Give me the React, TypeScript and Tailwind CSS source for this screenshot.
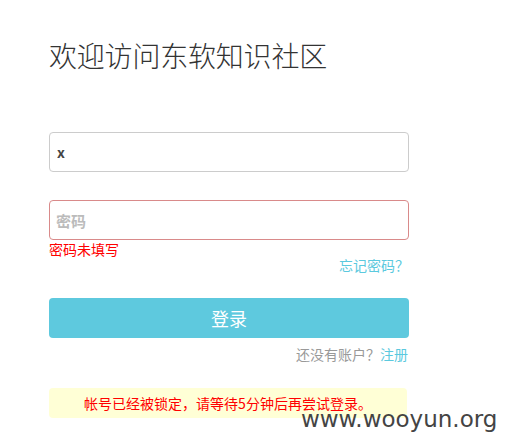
import React from 'react';

const font = { fontFamily: '"Noto Sans CJK SC", "Liberation Sans", sans-serif' };

export default function App() {
  return (
    <div className="relative w-[507px] h-[446px] bg-white overflow-hidden" style={font}>
      <div className="pl-[49px] w-[409px]">
        <h1 className="pt-[41px] text-[28px] leading-[28px] font-light text-[#333] tracking-[-0.2px]">
          欢迎访问东软知识社区
        </h1>

        <form className="mt-[63px] flex flex-col" onSubmit={(e) => e.preventDefault()}>
          <input
            defaultValue="x"
            className="h-[40px] w-[360px] rounded-[4px] border border-[#cccccc] px-[7px] text-[14px] font-bold text-[#444] outline-none"
          />
          <input
            type="password"
            placeholder="密码"
            className="mt-[28px] h-[40px] w-[360px] rounded-[4px] border border-[#d98a8a] px-[6px] text-[15px] font-bold text-[#444] placeholder:text-[#bbbbbb] outline-none"
          />
          <div className="mt-[1px] text-[14px] leading-[16px] text-[#ff0000]">密码未填写</div>
          <div className="text-right text-[14px] leading-[16px]">
            <a href="#" className="text-[#5bc9de]">忘记密码？</a>
          </div>

          <button
            type="submit"
            className="mt-[25px] h-[40px] w-[360px] rounded-[4px] bg-[#5ec9de] text-[18px] text-white"
          >
            登录
          </button>

          <div className="mt-[8px] text-right pr-[1px] text-[14px] leading-[16px] text-[#999]">
            还没有账户？<a href="#" className="text-[#5bc9de]">注册</a>
          </div>

          <div className="mt-[26px] h-[30px] w-[358px] rounded-[4px] bg-[#ffffd6] flex items-center justify-center text-[14px] text-[#ff0000]">
            帐号已经被锁定，请等待5分钟后再尝试登录。
          </div>
        </form>
      </div>

      <div
        className="absolute left-[301px] top-[404px] text-[23px] leading-[30px] text-[#444]"
        style={{ fontFamily: '"DejaVu Sans", sans-serif' }}
      >
        www.wooyun.org
      </div>
    </div>
  );
}
